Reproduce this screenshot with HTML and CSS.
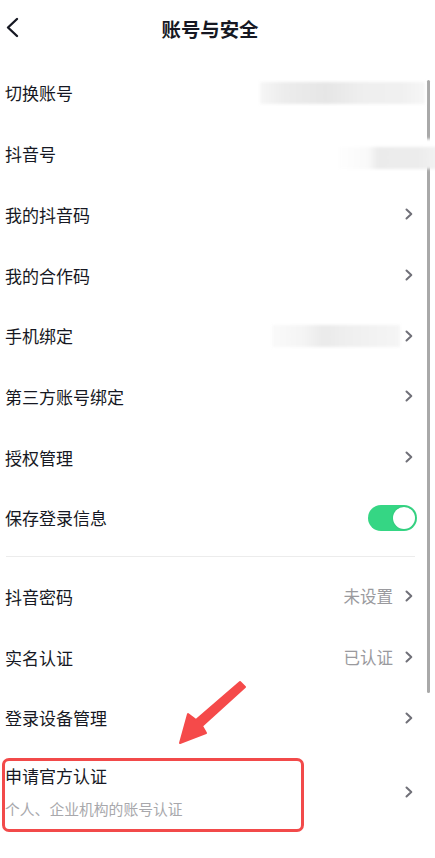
FILE: index.html
```html
<!DOCTYPE html>
<html>
<head>
  <title>账号与安全</title>
  <link rel="stylesheet" href="styles.css">
</head>
<body>
  <div class="page">
    <header class="nav">
      <svg class="back" width="14" height="22" viewBox="0 0 14 22">
        <polyline points="11,2 2,10.5 11,19" fill="none" stroke="#161823" stroke-width="2.4" stroke-linecap="round" stroke-linejoin="round"/>
      </svg>
      <h1>账号与安全</h1>
    </header>

    <div class="list">
      <div class="row">
        <span class="label">切换账号</span>
        <span class="blur blur-account"></span>
      </div>
      <div class="row">
        <span class="label">抖音号</span>
        <span class="blur blur-id"></span>
      </div>
      <div class="row">
        <span class="label">我的抖音码</span>
        <svg class="chev" width="8" height="12" viewBox="0 0 8 12"><polyline points="1.5,1.5 6.3,6 1.5,10.5"/></svg>
      </div>
      <div class="row">
        <span class="label">我的合作码</span>
        <svg class="chev" width="8" height="12" viewBox="0 0 8 12"><polyline points="1.5,1.5 6.3,6 1.5,10.5"/></svg>
      </div>
      <div class="row">
        <span class="label">手机绑定</span>
        <span class="blur blur-phone"></span>
        <svg class="chev" width="8" height="12" viewBox="0 0 8 12"><polyline points="1.5,1.5 6.3,6 1.5,10.5"/></svg>
      </div>
      <div class="row">
        <span class="label">第三方账号绑定</span>
        <svg class="chev" width="8" height="12" viewBox="0 0 8 12"><polyline points="1.5,1.5 6.3,6 1.5,10.5"/></svg>
      </div>
      <div class="row">
        <span class="label">授权管理</span>
        <svg class="chev" width="8" height="12" viewBox="0 0 8 12"><polyline points="1.5,1.5 6.3,6 1.5,10.5"/></svg>
      </div>
      <div class="row">
        <span class="label">保存登录信息</span>
        <span class="switch on"><span class="knob"></span></span>
      </div>
    </div>

    <div class="divider"></div>

    <div class="list">
      <div class="row">
        <span class="label">抖音密码</span>
        <span class="value">未设置</span>
        <svg class="chev" width="8" height="12" viewBox="0 0 8 12"><polyline points="1.5,1.5 6.3,6 1.5,10.5"/></svg>
      </div>
      <div class="row">
        <span class="label">实名认证</span>
        <span class="value">已认证</span>
        <svg class="chev" width="8" height="12" viewBox="0 0 8 12"><polyline points="1.5,1.5 6.3,6 1.5,10.5"/></svg>
      </div>
      <div class="row">
        <span class="label">登录设备管理</span>
        <svg class="chev" width="8" height="12" viewBox="0 0 8 12"><polyline points="1.5,1.5 6.3,6 1.5,10.5"/></svg>
      </div>
      <div class="row row-tall">
        <div class="texts">
          <span class="label">申请官方认证</span>
          <span class="sub">个人、企业机构的账号认证</span>
        </div>
        <svg class="chev" width="8" height="12" viewBox="0 0 8 12"><polyline points="1.5,1.5 6.3,6 1.5,10.5"/></svg>
      </div>
    </div>

    <!-- annotation overlays -->
    <div class="scrollbar"></div>
    <div class="highlight"></div>
    <svg class="pointer" width="84" height="72" viewBox="0 0 84 72">
      <polygon points="70,3 26,41 18,35 10,64 36,54 32,47 75,8" fill="#f54a4a" stroke="#f54a4a" stroke-width="2" stroke-linejoin="round"/>
    </svg>
  </div>
</body>
</html>
```

FILE: styles.css
```css
* {
  box-sizing: border-box;
}

body {
  margin: 0;
  background-color: #ffffff;
  color: #161823;
  font-family: "Noto Sans CJK SC", "Noto Sans", sans-serif;
}

.page {
  position: relative;
  width: 435px;
  height: 858px;
  overflow: hidden;
}

.nav {
  position: relative;
  height: 62.6px;
  display: flex;
  align-items: center;
  justify-content: center;
  padding-bottom: 6px;
}

.back {
  position: absolute;
  left: 6px;
  top: 17px;
}

h1 {
  margin: 0;
  margin-left: -15px;
  font-size: 19.4px;
  font-weight: 600;
  line-height: 1;
}

.row {
  height: 60.7px;
  display: flex;
  align-items: center;
  padding: 0 22px 0 5px;
}

.label {
  flex: 1;
  font-size: 17px;
  line-height: 1;
}

.value {
  font-size: 16.5px;
  color: #9a9a9e;
  margin-right: 12px;
}

.chev polyline {
  fill: none;
  stroke: #707078;
  stroke-width: 2;
  stroke-linecap: round;
  stroke-linejoin: round;
}

.blur {
  position: relative;
  z-index: 2;
  height: 22px;
  filter: blur(1.5px);
}

.blur-account {
  width: 165px;
  margin-right: -12px;
  background: linear-gradient(90deg, #f6f6f6 0%, #ececec 15%, #e6e6e6 40%, #eeeeee 60%, #f0f0f0 85%, #f6f6f6 100%);
}

.blur-id {
  width: 100px;
  height: 30px;
  margin-right: -25px;
  border-top: 8px solid #fff;
  background: linear-gradient(90deg, #fefefe 0%, #f9f9f9 30%, #ebebeb 40%, #ececec 80%, #f2f2f2 100%);
}

.blur-phone {
  width: 128px;
  margin-right: 5px;
  background: linear-gradient(90deg, #fafafa 0%, #f4f4f4 25%, #eaeaea 40%, #eeeeee 55%, #f2f2f2 80%, #f5f5f5 100%);
}

.switch {
  width: 49px;
  height: 26px;
  margin-right: -4px;
  border-radius: 13px;
  background-color: #35d684;
  display: flex;
  align-items: center;
  justify-content: flex-end;
  padding: 2px;
}

.knob {
  width: 22px;
  height: 22px;
  border-radius: 50%;
  background-color: #ffffff;
  box-shadow: 0 0 2px rgba(0, 0, 0, 0.15);
}

.divider {
  height: 1px;
  margin: 8px 20px 9px 6px;
  background-color: #ececec;
}

.row-tall {
  height: 92px;
  align-items: flex-start;
  padding-top: 19px;
}

.row-tall .chev {
  margin-top: 19px;
}

.texts {
  flex: 1;
  display: flex;
  flex-direction: column;
}

.sub {
  margin-top: 18px;
  font-size: 14.8px;
  line-height: 1;
  color: #a8a8ac;
}

.scrollbar {
  position: absolute;
  left: 427px;
  top: 80px;
  width: 3px;
  height: 613px;
  border-radius: 2px;
  background-color: #a9a9a9;
  z-index: 1;
}

.highlight {
  position: absolute;
  left: 2px;
  top: 758px;
  width: 302px;
  height: 74px;
  border: 3px solid #f24a4a;
  border-radius: 7px;
}

.pointer {
  position: absolute;
  left: 170px;
  top: 679px;
}
```
